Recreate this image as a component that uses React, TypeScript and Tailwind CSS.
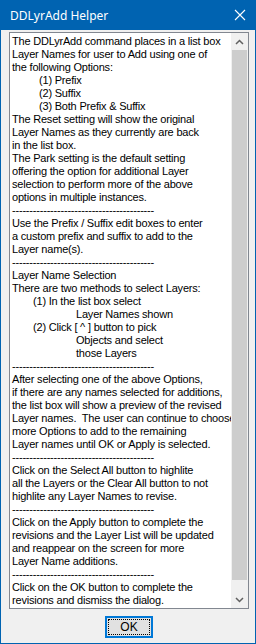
import React from "react";

const D = "-".repeat(41);

const lines: [string, number][] = [
  ["The DDLyrAdd command places in a list box", 0],
  ["Layer Names for user to Add using one of", 0],
  ["the following Options:", 0],
  ["(1) Prefix", 27],
  ["(2) Suffix", 27],
  ["(3) Both Prefix & Suffix", 27],
  ["The Reset setting will show the original", 0],
  ["Layer Names as they currently are back", 0],
  ["in the list box.", 0],
  ["The Park setting is the default setting", 0],
  ["offering the option for additional Layer", 0],
  ["selection to perform more of the above", 0],
  ["options in multiple instances.", 0],
  [D, 0],
  ["Use the Prefix / Suffix edit boxes to enter", 0],
  ["a custom prefix and suffix to add to the", 0],
  ["Layer name(s).", 0],
  [D, 0],
  ["Layer Name Selection", 0],
  ["There are two methods to select Layers:", 0],
  ["(1) In the list box select", 21],
  ["Layer Names shown", 64],
  ["(2) Click [ ^ ] button to pick", 21],
  ["Objects and select", 64],
  ["those Layers", 64],
  [D, 0],
  ["After selecting one of the above Options,", 0],
  ["if there are any names selected for additions,", 0],
  ["the list box will show a preview of the revised", 0],
  ["Layer names.  The user can continue to choose", 0],
  ["more Options to add to the remaining", 0],
  ["Layer names until OK or Apply is selected.", 0],
  [D, 0],
  ["Click on the Select All button to highlite", 0],
  ["all the Layers or the Clear All button to not", 0],
  ["highlite any Layer Names to revise.", 0],
  [D, 0],
  ["Click on the Apply button to complete the", 0],
  ["revisions and the Layer List will be updated", 0],
  ["and reappear on the screen for more", 0],
  ["Layer Name additions.", 0],
  [D, 0],
  ["Click on the OK button to complete the", 0],
  ["revisions and dismiss the dialog.", 0],
];

export default function App() {
  return (
    <div className="w-[256px] h-[644px] bg-[#0063b1] flex flex-col px-[1px] pb-[1px] overflow-hidden">
      {/* title bar */}
      <div className="h-[30px] flex items-center justify-between shrink-0">
        <span
          className="text-white text-[12px] pl-[9px] pt-[1px]"
          style={{ fontFamily: '"Noto Sans", "Liberation Sans", sans-serif' }}
        >
          DDLyrAdd Helper
        </span>
        <svg width="12" height="12" viewBox="0 0 12 12" className="mr-[9px]">
          <path d="M1 1 L11 11 M11 1 L1 11" stroke="#ffffff" strokeWidth="1.1" fill="none" />
        </svg>
      </div>
      {/* body */}
      <div className="flex-1 bg-[#f0f0f0] flex flex-col pt-[2px] pl-[8px] pr-[6px]">
        <div className="w-[240px] h-[577px] border border-[#828790] bg-white flex">
          <div
            className="flex-1 pl-[2px] pt-[2px] text-[11px] leading-[13px] tracking-[-0.2px] text-black overflow-hidden"
            style={{ fontFamily: '"Liberation Sans", Arial, sans-serif' }}
          >
            {lines.map(([t, ind], i) => (
              <div key={i} className="h-[13px] whitespace-pre" style={{ paddingLeft: ind }}>
                {t}
              </div>
            ))}
          </div>
          {/* scrollbar */}
          <div className="w-[17px] bg-[#f0f0f0] flex flex-col">
            <div className="h-[17px] flex items-center justify-center">
              <svg width="9" height="6" viewBox="0 0 9 6">
                <path d="M1 5 L4.5 1.5 L8 5" stroke="#606060" strokeWidth="1.5" fill="none" />
              </svg>
            </div>
            <div className="flex-1 flex flex-col">
              <div className="h-[530px] mx-[1px] bg-[#cdcdcd]" />
            </div>
            <div className="h-[17px] flex items-center justify-center">
              <svg width="9" height="6" viewBox="0 0 9 6">
                <path d="M1 1 L4.5 4.5 L8 1" stroke="#606060" strokeWidth="1.5" fill="none" />
              </svg>
            </div>
          </div>
        </div>
        <div className="flex justify-center pt-[7px]">
          <button className="w-[48px] h-[22px] border-2 border-[#0078d7] bg-[#e1e1e1] p-[1px] flex">
            <div
              className="flex-1 border border-dotted border-black flex items-center justify-center text-[12px] text-black"
              style={{ fontFamily: '"Liberation Sans", Arial, sans-serif' }}
            >
              OK
            </div>
          </button>
        </div>
      </div>
    </div>
  );
}
